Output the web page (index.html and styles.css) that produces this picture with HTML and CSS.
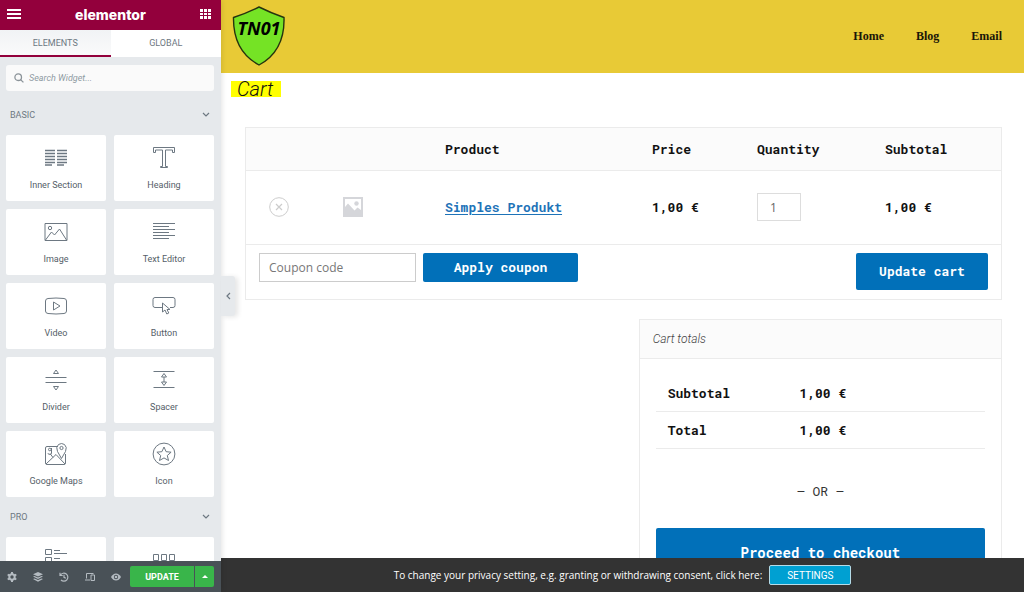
FILE: index.html
```html
<!DOCTYPE html>
<html lang="en">
<head>
    <meta charset="UTF-8">
    <meta name="viewport" content="width=device-width, initial-scale=1.0">
    <title>Elementor - Cart</title>
    <link rel="stylesheet" href="styles.css">
</head>
<body>
    <!-- Editor panel -->
    <aside class="panel">
        <header class="panel-header">
            <button class="icon-btn" aria-label="Menu">
                <svg width="14" height="12" viewBox="0 0 14 12" stroke="#fff" stroke-width="2"><path d="M0 2h14M0 6h14M0 10h14"/></svg>
            </button>
            <span class="brand">elementor</span>
            <button class="icon-btn" aria-label="Widgets">
                <svg width="12" height="12" viewBox="0 0 12 12" fill="#fff"><path d="M0 1h3v3H0zM4 1h3v3H4zM8 1h3v3H8zM0 5h3v2H0zM4 5h3v2H4zM8 5h3v2H8zM0 8h3v3H0zM4 8h3v3H4zM8 8h3v3H8z"/></svg>
            </button>
        </header>
        <nav class="tabs">
            <button class="tab active">ELEMENTS</button>
            <button class="tab">GLOBAL</button>
        </nav>
        <div class="panel-content">
            <label class="search">
                <svg width="10" height="10" viewBox="0 0 10 10" fill="none" stroke="#8b9399" stroke-width="1.3"><circle cx="4.2" cy="4.2" r="3.3"/><path d="M6.6 6.6L9.4 9.4"/></svg>
                <input type="text" placeholder="Search Widget..." aria-label="Search Widget">
            </label>

            <button class="category">BASIC
                <svg width="8" height="6" viewBox="0 0 8 6" fill="none" stroke="#6d7882" stroke-width="1.2"><path d="M1 1l3 3 3-3"/></svg>
            </button>
            <div class="widgets">
                <button class="widget">
                    <svg class="widget-icon" viewBox="0 0 24 24"><path stroke-width="1.4" d="M1 4.5h10M1 7.5h10M1 10.5h10M1 13.5h10M1 16.5h10M1 19h7M13 4.5h10M13 7.5h10M13 10.5h10M13 13.5h10M13 16.5h10M13 19h7"/></svg>
                    Inner Section
                </button>
                <button class="widget">
                    <svg class="widget-icon" viewBox="0 0 24 24"><path d="M1.5 1.5h21v5h-2v-2.500h-7v16.500h2v1h-7v-1h2V4h-7v2.500h-2z"/></svg>
                    Heading
                </button>
                <button class="widget">
                    <svg class="widget-icon" viewBox="0 0 24 24"><path d="M1 3.500h22v17H1zM1.500 20l6-8 3 3 5-6 7 11"/><circle cx="6" cy="8" r="1.700"/></svg>
                    Image
                </button>
                <button class="widget">
                    <svg class="widget-icon" viewBox="0 0 24 24"><path d="M1 3.500h22M1 6.500h16M1 9.500h22M1 12.500h16M1 15.500h22M1 18.500h16"/></svg>
                    Text Editor
                </button>
                <button class="widget">
                    <svg class="widget-icon" viewBox="0 0 24 24"><path d="M4 4.500Q12 3.500 20 4.500Q22.500 4.700 22.500 7V17Q22.500 19.300 20 19.500Q12 20.500 4 19.500Q1.500 19.300 1.500 17V7Q1.500 4.700 4 4.500zM9.500 8v8l6.500-4z"/></svg>
                    Video
                </button>
                <button class="widget">
                    <svg class="widget-icon" viewBox="0 0 24 24"><path d="M10 13.500H3q-2 0-2-2V5.500q0-2 2-2h18q2 0 2 2v6q0 2-2 2h-3"/><path d="M10.500 9v9l2.500-2 1.800 4 2-1-1.800-3.500h3z"/></svg>
                    Button
                </button>
                <button class="widget">
                    <svg class="widget-icon" viewBox="0 0 24 24"><path d="M1.500 9.500h21M1.500 14.500h21M9.500 5.500h5L12 2zM9.500 18.500h5L12 22z"/></svg>
                    Divider
                </button>
                <button class="widget">
                    <svg class="widget-icon" viewBox="0 0 24 24"><path d="M1.500 3.500h21M1.500 19.500h21M9.500 9h5L12 5.500zM9.500 14h5L12 17.500zM12 9v5"/></svg>
                    Spacer
                </button>
                <button class="widget">
                    <svg class="widget-icon" viewBox="0 0 24 24"><path d="M14 4.500H3q-1.500 0-1.500 1.500v15q0 1.500 1.500 1.500h17q1.500 0 1.500-1.500V12M2 22l10-9.500 9 9.500M9 15.500l-3-4M17.500 16.500L13.500 9.500Q11.500 5 14.500 2.500Q17.500 .5 20.500 2.500Q23.500 5 21.500 9.500z"/><circle cx="17.500" cy="6" r="1.600"/><circle cx="5.800" cy="7.500" r="1.300"/><path d="M7.500 6v5q0 1.500-1.700 1.500T4 11.200"/></svg>
                    Google Maps
                </button>
                <button class="widget">
                    <svg class="widget-icon" viewBox="0 0 24 24"><circle cx="12" cy="12" r="10.900"/><path d="M12 5l2.100 4.700 5 .500-3.800 3.300 1.200 5-4.500-2.600-4.500 2.600 1.200-5L4.900 10.200l5-.500z"/></svg>
                    Icon
                </button>
            </div>

            <button class="category">PRO
                <svg width="8" height="6" viewBox="0 0 8 6" fill="none" stroke="#6d7882" stroke-width="1.200"><path d="M1 1l3 3 3-3"/></svg>
            </button>
            <!-- Only the icons of this row are above the footer -->
            <div class="widgets">
                <button class="widget" aria-label="Posts">
                    <svg class="widget-icon" viewBox="0 0 24 24"><path d="M1.500 1.500h6v5h-6zM1.500 9.500h6v5h-6zM10 2.500h6M10 5.500h13M10 10.500h6M10 13.500h13"/></svg>
                </button>
                <button class="widget" aria-label="Portfolio">
                    <svg class="widget-icon" viewBox="0 0 24 24"><path d="M1.500 6.500h5v6h-5zM9.500 6.500h5v6h-5zM17.500 6.500h5v6h-5zM1.500 15.500h5v6h-5zM9.500 15.500h5v6h-5zM17.500 15.500h5v6h-5z"/></svg>
                </button>
            </div>
        </div>
        <footer class="panel-footer">
            <div class="tools">
                <button class="icon-btn" aria-label="Settings">
                    <svg width="10" height="10" viewBox="0 0 10 10"><circle cx="5" cy="5" r="2.700" fill="none" stroke="#b4bbc1" stroke-width="2"/><path stroke="#b4bbc1" stroke-width="2" d="M5 0v2M5 8v2M.7 2.500l1.700 1M7.600 6.500l1.700 1M.7 7.500l1.700-1M7.600 3.500l1.700-1"/></svg>
                </button>
                <button class="icon-btn" aria-label="Navigator">
                    <svg width="10" height="10" viewBox="0 0 10 10" fill="#b4bbc1"><path d="M5 0l5 2.300-5 2.300L0 2.300zM0 4.500l1.500-.6L5 5.500l3.500-1.600 1.500.6L5 7zM0 7l1.500-.6L5 8l3.500-1.600L10 7 5 9.700z"/></svg>
                </button>
                <button class="icon-btn" aria-label="History">
                    <svg width="10" height="10" viewBox="0 0 10 10" fill="none" stroke="#b4bbc1" stroke-width="1.200"><path d="M1.500 3A4 4 0 1 1 2 8M1 .8v2.700h2.700M5 2.800v2.500l1.800 1"/></svg>
                </button>
                <button class="icon-btn" aria-label="Responsive Mode">
                    <svg width="10" height="10" viewBox="0 0 10 10" fill="none" stroke="#b4bbc1"><path d="M1.500 6.500v-5h7M0 8h5M6 3h3.500v5.500H6z"/></svg>
                </button>
                <button class="icon-btn" aria-label="Preview Changes">
                    <svg width="10" height="10" viewBox="0 0 10 10"><path fill="#b4bbc1" d="M0 5Q2 1.500 5 1.500T10 5Q8 8.500 5 8.500T0 5z"/><circle cx="5" cy="5" r="2.200" fill="#495157"/><circle cx="5" cy="5" r="1.300" fill="#b4bbc1"/></svg>
                </button>
            </div>
            <div class="publish">
                <button class="update">UPDATE</button>
                <button class="update-options" aria-label="Save Options">
                    <svg width="6" height="4" viewBox="0 0 6 4" fill="#fff"><path d="M3 0l3 3H0z"/></svg>
                </button>
            </div>
        </footer>
        <button class="collapse" aria-label="Hide Panel">
            <svg width="5" height="8" viewBox="0 0 5 8" fill="none" stroke="#6d7882" stroke-width="1.200"><path d="M4 1L1 4l3 3"/></svg>
        </button>
    </aside>

    <!-- Page preview -->
    <main class="preview">
        <header class="site-header">
            <svg class="shield" width="54" height="62" viewBox="0 0 54 62">
                <path fill="#75e325" stroke="#26340f" stroke-width="1.400" d="M27 1Q39 7 52 11.500Q53 45 27 59Q1 45 1.500 11.500Q15 7 27 1z"/>
                <text class="shield-text" x="27" y="29" text-anchor="middle">TN01</text>
            </svg>
            <nav class="site-nav">
                <a href="#">Home</a>
                <a href="#">Blog</a>
                <a href="#">Email</a>
            </nav>
        </header>

        <div class="page">
            <h1 class="page-title"><span class="highlight">Cart</span></h1>

            <div class="cart">
                <table class="cart-table">
                    <colgroup>
                        <col class="col-remove">
                        <col class="col-thumb">
                        <col>
                        <col class="col-price">
                        <col class="col-quantity">
                        <col class="col-subtotal">
                    </colgroup>
                    <thead>
                        <tr>
                            <th></th>
                            <th></th>
                            <th>Product</th>
                            <th>Price</th>
                            <th>Quantity</th>
                            <th>Subtotal</th>
                        </tr>
                    </thead>
                    <tbody>
                        <tr>
                            <td class="remove-cell">
                                <button class="remove" aria-label="Remove this item">
                                    <svg width="20" height="20" viewBox="0 0 20 20" fill="none" stroke="#ccc"><circle cx="10" cy="10" r="9.300"/><path stroke-width="1.200" d="M7 7l6 6M13 7l-6 6"/></svg>
                                </button>
                            </td>
                            <td class="thumb-cell">
                                <svg width="20" height="20" viewBox="0 0 20 20"><path fill="#d5d6da" d="M0 0h20v20H0z"/><path fill="#fff" d="M2 2h16v11l-3.500-2.500-3 3L5 6.500 2 10z"/><circle cx="13.500" cy="6.500" r="2.200" fill="#d5d6da"/></svg>
                            </td>
                            <td><a href="#">Simples Produkt</a></td>
                            <td>1,00 €</td>
                            <td><input class="quantity" type="text" value="1" aria-label="Quantity"></td>
                            <td>1,00 €</td>
                        </tr>
                    </tbody>
                </table>
                <div class="actions">
                    <input class="coupon" type="text" placeholder="Coupon code" aria-label="Coupon code">
                    <button class="button apply">Apply coupon</button>
                    <button class="button update-cart">Update cart</button>
                </div>
            </div>

            <section class="totals">
                <h2>Cart totals</h2>
                <div class="totals-body">
                    <table class="totals-table">
                        <tr>
                            <th>Subtotal</th>
                            <td>1,00 €</td>
                        </tr>
                        <tr>
                            <th>Total</th>
                            <td>1,00 €</td>
                        </tr>
                    </table>
                    <p class="or">— OR —</p>
                    <button class="button checkout">Proceed to checkout</button>
                </div>
            </section>
        </div>

        <div class="cookie-bar">
            <span>To change your privacy setting, e.g. granting or withdrawing consent, click here:</span>
            <button class="cookie-settings">SETTINGS</button>
        </div>
    </main>
</body>
</html>
```
FILE: styles.css
```css
* {
    box-sizing: border-box;
}
body {
    margin: 0;
    display: flex;
    height: 100vh;
    overflow: hidden;
    background: #fff;
    font-family: Roboto, Arial, sans-serif;
}
button {
    border: none;
    padding: 0;
    background: none;
    font-family: inherit;
    cursor: pointer;
}
svg {
    display: block;
}

/* Editor panel */
.panel {
    position: relative;
    z-index: 1;
    display: flex;
    flex-direction: column;
    flex: 0 0 221px;
    background: #e6e9ec;
    color: #6d7882;
    box-shadow: 0 0 6px rgba(0, 0, 0, 0.15);
}
.panel-header {
    display: flex;
    justify-content: space-between;
    align-items: center;
    flex: 0 0 30px;
    padding: 0 9px 2px 7px;
    background: #93003c;
}
.brand {
    color: #fff;
    font-family: Inter, sans-serif;
    font-size: 14px;
    font-weight: 800;
}
.tabs {
    display: flex;
    flex: 0 0 27px;
}
.tab {
    flex: 1;
    border-bottom: 2px solid #fff;
    background: #fff;
    color: #6d7882;
    font-size: 9px;
}
.tab.active {
    border-color: #93003c;
    background: linear-gradient(#f1f3f5, #fafafb);
}
.panel-content {
    flex: 1;
    min-height: 0;
    overflow: hidden;
    padding: 8px 7px 0 6px;
}
.search {
    display: flex;
    align-items: center;
    gap: 5px;
    height: 26px;
    margin-bottom: 4px;
    padding: 0 8px;
    border-radius: 3px;
    background: #fafafa;
}
.search input {
    flex: 1;
    min-width: 0;
    padding: 0;
    border: none;
    outline: none;
    background: none;
    font-family: inherit;
    font-size: 9px;
    font-style: italic;
}
.search input::placeholder {
    color: #8f9aa3;
}
.category {
    display: flex;
    justify-content: space-between;
    align-items: center;
    width: 100%;
    height: 40px;
    padding: 0 4px;
    color: #6d7882;
    font-size: 9px;
}
.widgets {
    display: grid;
    grid-template-columns: 1fr 1fr;
    gap: 8px;
}
.widget {
    display: flex;
    flex-direction: column;
    align-items: center;
    gap: 9px;
    height: 66px;
    padding-top: 11px;
    border-radius: 2px;
    background: #fff;
    color: #556068;
    font-size: 9px;
    line-height: 12px;
}
.widget-icon {
    width: 24px;
    height: 24px;
    fill: none;
    stroke: #6d7882;
    stroke-width: 1;
}
.panel-footer {
    display: flex;
    align-items: center;
    justify-content: space-between;
    flex: 0 0 31px;
    padding: 0 7px;
    background: #495157;
}
.tools {
    display: flex;
    gap: 16px;
}
.publish {
    display: flex;
    gap: 1px;
    height: 21px;
}
.update, .update-options {
    display: flex;
    align-items: center;
    justify-content: center;
    background: #39b54a;
    color: #fff;
}
.update {
    width: 64px;
    border-radius: 2px 0 0 2px;
    font-size: 9px;
    font-weight: 700;
}
.update-options {
    width: 19px;
    border-radius: 0 2px 2px 0;
}
.collapse {
    position: absolute;
    top: 276px;
    left: 100%;
    display: flex;
    align-items: center;
    justify-content: center;
    width: 14px;
    height: 40px;
    border-radius: 0 3px 3px 0;
    background: #e6e9ec;
    box-shadow: 3px 1px 5px rgba(0, 0, 0, 0.1);
}

/* Site preview */
.preview {
    display: flex;
    flex-direction: column;
    flex: 1;
    min-width: 0;
    font-family: "Roboto Mono", "Liberation Mono", monospace;
    font-size: 13px;
    color: #111;
}
.site-header {
    display: flex;
    justify-content: space-between;
    align-items: center;
    flex: 0 0 73px;
    padding: 0 22px 0 11px;
    background: #e8ca36;
}
.shield-text {
    font-family: "Open Sans", sans-serif;
    font-size: 18px;
    font-style: italic;
    font-weight: 700;
}
.site-nav {
    display: flex;
    gap: 32px;
}
.site-nav a {
    color: #1a1608;
    font-family: "Liberation Serif", serif;
    font-size: 12px;
    font-weight: 700;
    text-decoration: none;
}
.page {
    flex: 1;
    min-height: 0;
    overflow: hidden;
    padding: 4px 22px 0 24px;
}
.page-title {
    height: 24px;
    margin: 0 0 26px -14px;
    font-family: Roboto, sans-serif;
    font-size: 20px;
    font-style: italic;
    font-weight: 300;
    line-height: 24px;
}
.highlight {
    display: inline-block;
    padding: 0 8px 0 6px;
    background: linear-gradient(transparent 4px, #ff0 4px, #ff0 20px, transparent 20px);
}
.cart {
    border: 1px solid #ebebeb;
}
.cart-table {
    width: 100%;
    table-layout: fixed;
    border-collapse: collapse;
    font-weight: 700;
}
.col-remove {
    width: 84px;
}
.col-thumb {
    width: 102px;
}
.col-price {
    width: 105px;
}
.col-quantity {
    width: 128px;
}
.col-subtotal {
    width: 129px;
}
.cart-table th, .cart-table td {
    padding: 0 0 0 13px;
    border-bottom: 1px solid #ebebeb;
    text-align: left;
}
.cart-table th {
    height: 42px;
    background: #fbfbfb;
}
.cart-table td {
    height: 74px;
}
.cart-table .remove-cell {
    padding-left: 23px;
}
.remove {
    display: block;
}
.cart-table a {
    color: #1e73b8;
    text-underline-offset: 2px;
}
.quantity {
    display: block;
    width: 44px;
    height: 28px;
    padding: 0 12px;
    border: 1px solid #ddd;
    color: #666;
    font-family: "Open Sans", sans-serif;
    font-size: 12px;
}
.actions {
    display: flex;
    align-items: flex-start;
    gap: 7px;
    padding: 8px 13px 9px;
}
.coupon {
    width: 157px;
    height: 29px;
    padding: 0 9px;
    border: 1px solid #ccc;
    font-family: "Open Sans", sans-serif;
    font-size: 12px;
}
.coupon::placeholder {
    color: #777;
}
.button {
    border-radius: 2px;
    background: #0170b9;
    color: #fff;
    font-size: 13px;
    font-weight: 700;
}
.apply {
    width: 155px;
    height: 29px;
}
.update-cart {
    width: 132px;
    height: 37px;
    margin-left: auto;
}
.totals {
    width: 48%;
    margin: 19px 0 0 auto;
    border: 1px solid #ebebeb;
}
.totals h2 {
    margin: 0;
    padding: 0 13px;
    border-bottom: 1px solid #ebebeb;
    background: #fbfbfb;
    color: #444;
    font-family: Roboto, sans-serif;
    font-size: 12px;
    font-style: italic;
    font-weight: 300;
    line-height: 38px;
}
.totals-body {
    padding: 16px;
}
.totals-table {
    width: 100%;
    border-collapse: collapse;
    font-weight: 700;
    text-align: left;
}
.totals-table th, .totals-table td {
    height: 37px;
    padding: 0 0 0 12px;
    border-bottom: 1px solid #ebebeb;
}
.totals-table th {
    width: 40%;
}
.or {
    margin: 0;
    padding: 32px 0 27px;
    color: #333;
    line-height: 20px;
    text-align: center;
}
.checkout {
    width: 100%;
    height: 48px;
    font-size: 14px;
}
.cookie-bar {
    display: flex;
    align-items: center;
    justify-content: center;
    gap: 7px;
    flex: 0 0 34px;
    background: #333;
    color: #fff;
    font-family: "Open Sans", sans-serif;
    font-size: 10px;
}
.cookie-settings {
    width: 82px;
    height: 20px;
    border: 1px solid #b5dbe8;
    border-radius: 2px;
    background: #00a0d2;
    color: #fff;
    font-family: Roboto, sans-serif;
    font-size: 10px;
}
```
